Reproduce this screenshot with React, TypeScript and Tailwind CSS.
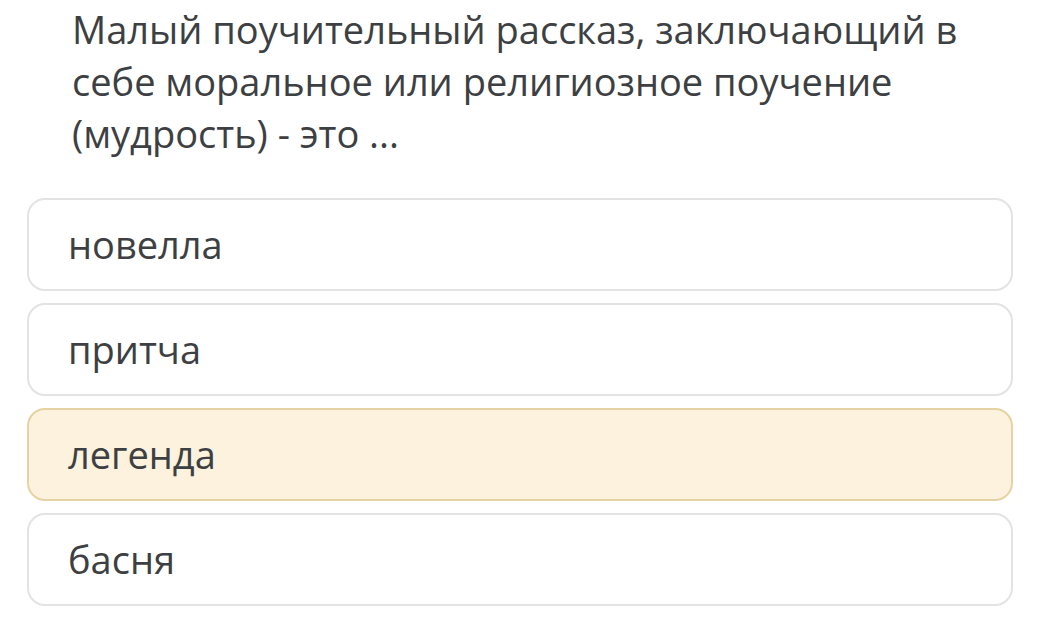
const options = [
  { label: 'новелла', selected: false },
  { label: 'притча', selected: false },
  { label: 'легенда', selected: true },
  { label: 'басня', selected: false },
];

export default function App() {
  return (
    <div className="w-[1047px] h-[632px] overflow-hidden bg-white font-['Open_Sans',sans-serif] text-[#3d4043]">
      <div className="pl-[72px] pr-[50px] pt-[3px] text-[38px] leading-[52px]">
        Малый поучительный рассказ, заключающий в себе моральное или религиозное поучение (мудрость) - это ...
      </div>
      <div className="mt-[39px] ml-[27px] w-[986px] flex flex-col gap-[12px]">
        {options.map((o) => (
          <div
            key={o.label}
            className={
              o.selected
                ? 'h-[93px] rounded-[18px] border-2 border-[#e6d3a3] bg-[#fcf2dd] flex items-center pl-[39px] text-[38px]'
                : 'h-[93px] rounded-[18px] border-2 border-[#e3e3e3] bg-white flex items-center pl-[39px] text-[38px]'
            }
          >
            {o.label}
          </div>
        ))}
      </div>
    </div>
  );
}
